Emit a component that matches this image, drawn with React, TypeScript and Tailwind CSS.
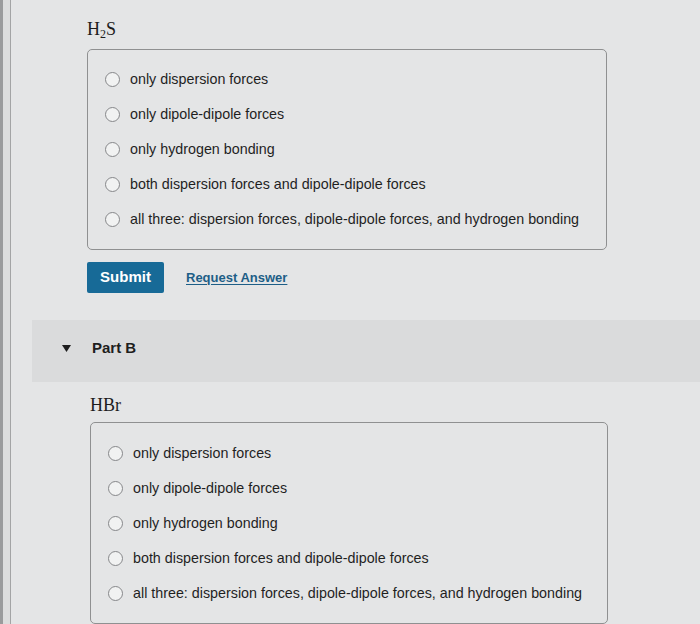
const OPTIONS = [
  'only dispersion forces',
  'only dipole-dipole forces',
  'only hydrogen bonding',
  'both dispersion forces and dipole-dipole forces',
  'all three: dispersion forces, dipole-dipole forces, and hydrogen bonding',
];

const Radio = ({ label }: { label: string }) => (
  <label className="flex h-[35px] items-center gap-[10px]">
    <span className="h-[15px] w-[15px] shrink-0 rounded-full border border-[#86878a] bg-[#f1f2f2]"></span>
    <span className="text-[14.3px] text-[#1f1f1f]">{label}</span>
  </label>
);

const OptionBox = ({ className }: { className: string }) => (
  <div className={`rounded-[5px] border border-[#8f9091] pl-[17px] ${className}`}>
    {OPTIONS.map(o => (
      <Radio key={o} label={o} />
    ))}
  </div>
);

export default function App() {
  return (
    <div className="flex h-[624px] w-[700px] overflow-hidden bg-[#e4e5e6] font-['Liberation_Sans',Arial,sans-serif]">
      <div className="w-[11px] shrink-0 border-r border-[#a3a4a5] bg-[#dcdddd]">
        <div className="h-full w-[3px] bg-[#9a9b9c]"></div>
      </div>

      <div className="ml-[21px] flex flex-1 flex-col">
        <div className="pl-[55px] pt-[18px]">
          <div className="font-['Liberation_Serif','Times_New_Roman',serif] text-[18px] leading-[22px] text-[#1c1c1c]">
            H<sub className="text-[12px]">2</sub>S
          </div>
          <OptionBox className="mt-[9px] w-[520px] pb-3 pt-3" />
          <div className="mt-[12px] flex items-center gap-[22px]">
            <button className="h-[31px] w-[77px] rounded-[2px] bg-[#176a97] text-[15px] font-bold text-white">
              Submit
            </button>
            <a className="text-[13px] font-bold text-[#1d5e87] underline underline-offset-2">Request Answer</a>
          </div>
        </div>

        <div className="mt-[27px] flex h-[63px] items-center bg-[#dadbdc] pb-[5px] pl-[30px]">
          <svg width="9" height="7" viewBox="0 0 9 7" className="mr-[21px]">
            <path d="M0 0 H9 L4.5 7 Z" fill="#1e1e1e" />
          </svg>
          <span className="text-[15px] font-bold text-[#1e1e1e]">Part B</span>
        </div>

        <div className="pl-[58px] pt-[12px]">
          <div className="font-['Liberation_Serif','Times_New_Roman',serif] text-[18px] leading-[22px] text-[#1c1c1c]">
            HBr
          </div>
          <OptionBox className="mt-[6px] w-[518px] pb-3 pt-[13px]" />
        </div>
      </div>
    </div>
  );
}
